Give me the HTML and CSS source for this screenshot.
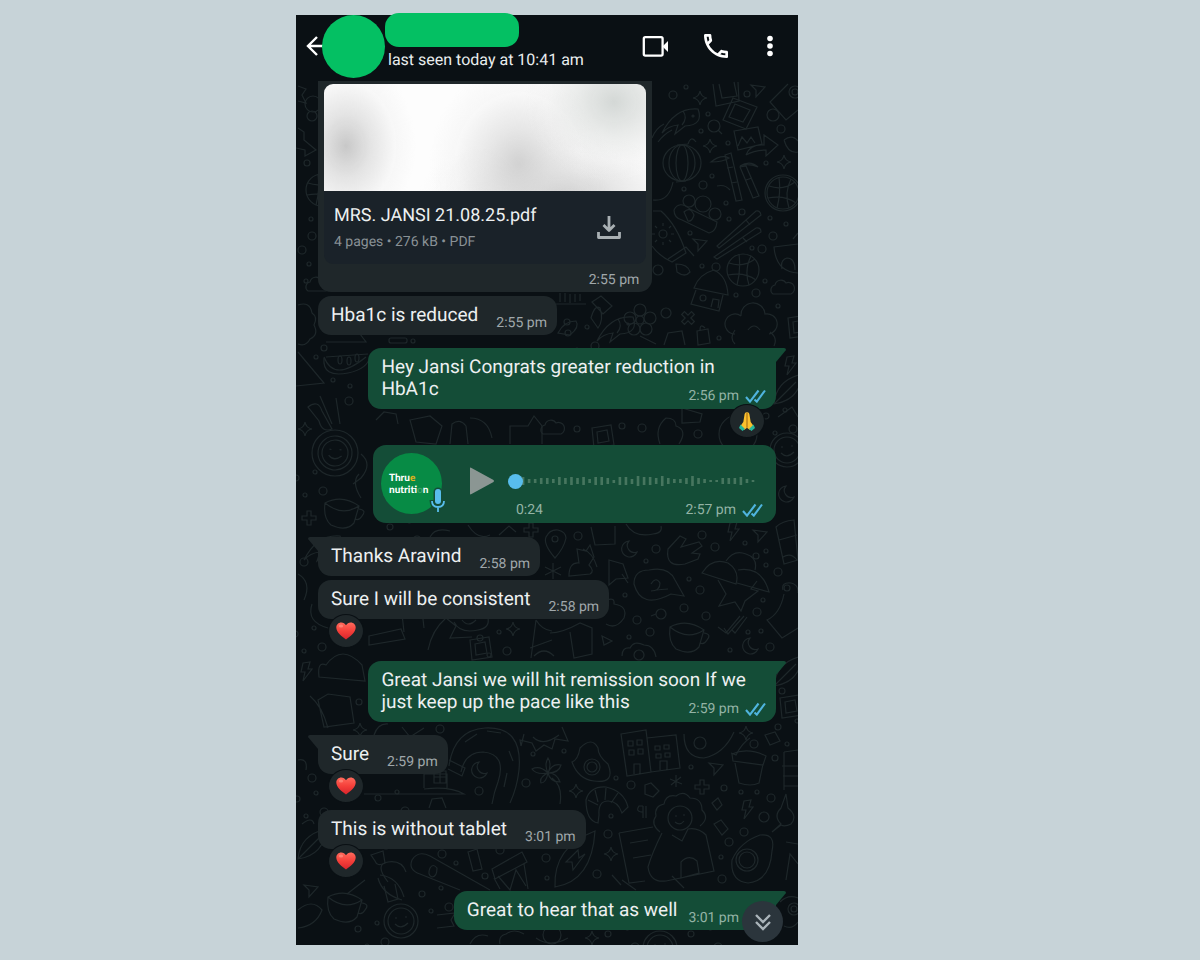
FILE: index.html
```html
<!DOCTYPE html>
<html lang="en">
<head>
<meta charset="utf-8">
<meta name="viewport" content="width=device-width, initial-scale=1">
<title>Chat</title>
<link rel="stylesheet" href="styles.css">
</head>
<body>
<svg class="defs" aria-hidden="true">
  <defs>
    <linearGradient id="heartFill" x1="0" y1="0" x2="0" y2="1"><stop offset="0" stop-color="#ff6a5c"/><stop offset=".5" stop-color="#f5403a"/><stop offset="1" stop-color="#d8242c"/></linearGradient>
    <symbol id="heart" viewBox="0 0 20 18"><path fill="url(#heartFill)" d="M10 17.6C6 14.6.3 10.500.3 5.600.3 2.600 2.500.4 5.300.4c2 0 3.700 1.100 4.700 2.900C11 1.500 12.700.4 14.700.4c2.800 0 5 2.200 5 5.200 0 4.900-5.700 9-9.700 12z"/><ellipse cx="5" cy="4" rx="2.200" ry="1.500" fill="#ff9c8c" opacity=".6"/></symbol>
    <symbol id="hands" viewBox="0 0 18 20"><path fill="#fbc02d" d="M8.800 1C7 1.200 6.500 3 6.300 5L5.300 11l-2.500 3.500L6 19l2.800-2zM9.200 1c1.800.2 2.300 2 2.500 4l1 6 2.500 3.500L12 19l-2.800-2z"/><path d="M9 2v14.500" stroke="#c98212" stroke-width="1"/><path fill="#26b59b" d="M2.500 13.500 7 18l-2.500 2L1 17zM15.500 13.500 11 18l2.500 2L17 17z"/></symbol>
    <symbol id="ticks" viewBox="0 0 21 14"><path d="M1 8l4 4.600L13.500 1.500M9.500 10.500l2.300 2.100L20 1.500" fill="none" stroke="#4fb4de" stroke-width="2.100"/></symbol>
    <path id="star" d="M0-7Q1-1 7 0 1 1 0 7-1 1-7 0-1-1 0-7z"/>
    <path id="bolt" d="M-3-9 4-10 2-3 6-3-3 9-1 0-5 0z"/>
    <path id="plane" d="M-7-5 7-3-2 7-2 0z"/>
    <path id="moon" d="M0-8A8 8 0 1 0 8 3 7 7 0 0 1 0-8z"/>
    <path id="cloud" d="M-9 6A5 5 0 0 1-7-3 6 6 0 0 1 4-5 5 5 0 0 1 9 6z"/>
    <path id="cross" d="M-2-7H2V-2H7V2H2V7H-2V2H-7V-2H-2z"/>
    <path id="leaf" d="M-14 14Q-12-10 14-16 12 10-14 14zM-14 14 8-8"/>
    <g id="blossom"><circle r="4"/><circle cy="-10" r="6"/><circle cx="10" cy="-2" r="6"/><circle cx="6" cy="9" r="6"/><circle cx="-6" cy="9" r="6"/><circle cx="-10" cy="-2" r="6"/></g>
    <g id="dots"><circle cx="-14" cy="-6" r="3"/><circle cx="5" cy="-12" r="2"/><circle cx="13" cy="7" r="4"/><circle cx="-5" cy="11" r="2"/></g>
    <g id="smile"><circle r="17"/><circle r="13"/><path d="M-6-3h2M4-4h2M-6 3Q0 9 7 2"/></g>
    <g id="ball"><circle r="16"/><path d="M-14-7Q0-2 12-11M-15 5Q2 2 13 10M-4-16Q-2 0-6 15M8-14Q1 0 6 15"/></g>
    <g id="box"><path d="M-10-8 9-11 12 9-8 12zM-5-4 5-6 7 5-4 7z"/></g>
    <g id="cup"><path d="M-17-9Q0-18 17-6L12 11Q4 20-11 13-19 6-17-9zM-17-9Q0 5 17-6M17-3Q25-2 20 4 17 9 13 7"/></g>
    <g id="fish"><path d="M-18 12Q-5-14 18-12 24 4 5 5L-5 13-2 4Q-12 5-18 12zM3-10Q8-3 2 4"/><circle cx="13" cy="-5" r="1"/></g>
  </defs>
</svg>

<main class="phone">
  <header class="topbar">
    <button class="icon-btn back" aria-label="Back"><svg viewBox="0 0 22 22" width="22" height="22"><path d="M11 2 2 11l9 9M2 11h20" fill="none" stroke="#fff" stroke-width="2.400"/></svg></button>
    <span class="avatar"></span>
    <div class="who">
      <span class="name"></span>
      <span class="seen">last seen today at 10:41 am</span>
    </div>
    <nav class="actions" aria-label="Chat actions">
      <button class="icon-btn" aria-label="Video call"><svg viewBox="0 0 32 32" width="32" height="32"><rect x="3.800" y="7.200" width="18.800" height="18.400" rx="1.500" fill="none" stroke="#fff" stroke-width="2.300"/><path d="m23 16 5-5v11l-5-5z" fill="#fff"/></svg></button>
      <button class="icon-btn" aria-label="Voice call"><svg viewBox="0 0 24 24" width="32" height="32"><path fill="#fff" d="M6.540 5c.06.890.210 1.760.450 2.590l-1.200 1.200c-.410-1.200-.670-2.470-.760-3.790h1.510m9.860 12.020c.850.240 1.720.390 2.600.450v1.490c-1.320-.090-2.590-.350-3.800-.750l1.200-1.190M7.500 3H4c-.550 0-1 .450-1 1 0 9.390 7.610 17 17 17 .550 0 1-.450 1-1v-3.490c0-.550-.450-1-1-1-1.240 0-2.450-.200-3.570-.570-.100-.040-.210-.050-.310-.050-.260 0-.510.100-.710.290l-2.200 2.200c-2.830-1.450-5.150-3.760-6.590-6.590l2.200-2.200c.280-.280.360-.670.250-1.020C8.700 6.450 8.500 5.250 8.500 4c0-.550-.450-1-1-1z"/></svg></button>
      <button class="icon-btn" aria-label="More options"><svg viewBox="0 0 20 32" width="20" height="32" fill="#fff"><circle cx="10" cy="8.500" r="2.800"/><circle cx="10" cy="16" r="2.800"/><circle cx="10" cy="23.500" r="2.800"/></svg></button>
    </nav>
  </header>

  <section class="chat">
    <svg class="doodles" viewBox="296 81 502 864" preserveAspectRatio="xMidYMin slice" aria-hidden="true">
      <!-- left margin -->
      <path d="M298 86l8 3-4 6 4 8-8-2M298 128l6 4v8l12 10-11 6v-6l-9-2"/>
      <circle cx="313" cy="104" r="8"/><circle cx="312" cy="116" r="5"/><use href="#ball" x="322" y="190"/><circle cx="307" cy="163" r="3"/>
      <circle cx="311" cy="219" r="2"/><circle cx="312" cy="236" r="4"/><circle cx="302" cy="250" r="4"/><circle cx="309" cy="264" r="2"/><circle cx="306" cy="281" r="2"/><use href="#cloud" x="317" y="285"/>
      <!-- top right -->
      <circle cx="673" cy="95" r="4"/><circle cx="686" cy="87" r="2"/><use href="#star" x="700" y="98"/><circle cx="708" cy="114" r="2"/>
      <path d="M713 84l3 22 23-5-1-19M719 84l3 14 15-2-3-14M733 98l24 9-11 22-23-9zM735 104l15 6-7 12-14-5z"/>
      <use href="#plane" x="758" y="90"/><circle cx="747" cy="94" r="3"/><path d="M788 84l-18 18 16 18 12-10"/><circle cx="795" cy="92" r="6"/><circle cx="795" cy="92" r="3"/>
      <circle cx="773" cy="115" r="6"/><circle cx="781" cy="129" r="4"/><use href="#fish" x="680" y="121"/><circle cx="714" cy="126" r="6"/><path d="M718 130l4 4M664 124q-8 4-12 14M672 130q-8 4-14 12"/>
      <path d="M734 131l24-4 4 17-24 6zM738 146l4-9 5 6 4-6 4 6M746 155q4-11 18-10v-10l14 10-12 11v-6q-12 0-20 5"/>
      <use href="#star" x="710" y="146"/><circle cx="701" cy="131" r="2"/><circle cx="728" cy="143" r="2"/><path d="M784 140q8-6 14 1M784 140q4 14 14 12"/>
      <ellipse cx="682" cy="163" rx="19" ry="18"/><ellipse cx="682" cy="163" rx="6" ry="18"/><ellipse cx="682" cy="163" rx="13" ry="18"/><path d="M677 145l11-1M676 182l10-1M688 144q3-9 8-2M673 182q-4 20-20 18"/>
      <path d="M725 155l6-2 11 47-6 1zM740 167l6-1 13 30-6 2zM711 162q10-8 18-4-6 4-18 4zM740 166q10-6 18 1-10-4-18-1zM717 186q8-2 13 4M727 168l6-1M731 183l6-1M746 180l6-2"/>
      <circle cx="766" cy="163" r="2"/><use href="#star" x="784" y="162"/><use href="#ball" x="783" y="193"/><circle cx="783" cy="193" r="18"/><circle cx="712" cy="176" r="2"/><circle cx="703" cy="185" r="4"/><circle cx="684" cy="189" r="2"/>
      <circle cx="689" cy="201" r="6"/><circle cx="703" cy="204" r="8"/><circle cx="715" cy="214" r="6"/><path d="M674 210q5-10 16-1l27 13q-1 10-8 11l-27-13q-8-2-8-10M684 212q6-6 10 3-2 7-6 6z"/>
      <circle cx="726" cy="203" r="2"/><circle cx="742" cy="212" r="3"/><circle cx="729" cy="219" r="2"/><circle cx="770" cy="218" r="2"/><circle cx="786" cy="224" r="2"/><circle cx="773" cy="236" r="4"/>
      <path d="M717 246l39-35q4-1 5 4l-42 33zM714 257l42-29q5-1 5 4l-44 27zM746 220l4 5M743 238l4 4"/>
      <path d="M653 211h8q16 14 25 42l-14 9q-13-6-20-16M668 259l18-12 8 9"/><circle cx="663" cy="234" r="4"/><path d="M663 226v-3M663 245v-3M655 234h-3M674 234h-3M657 228l-2-2M669 240l2 2M657 240l-2 2M669 228l2-2"/>
      <use href="#plane" x="700" y="244"/><circle cx="690" cy="233" r="2"/><circle cx="752" cy="248" r="2"/><circle cx="762" cy="249" r="4"/><path d="M798 244l-24 3q2 25 24 26M782 269q-2-9 5-11 8 0 8 12M798 233l-5 6"/>
      <circle cx="658" cy="270" r="5"/><path d="M676 264q12 0 14 8-5 6-13 0z"/><circle cx="702" cy="266" r="2"/><use href="#ball" x="743" y="270"/>
      <path d="M694 288q5-14 20-18 13 6 14 25l-34-7zM696 290l-5 14 28 7 4-16M711 307l2-8 6 1-1 8"/><circle cx="716" cy="267" r="4"/><circle cx="703" cy="298" r="3"/>
      <use href="#cloud" x="782" y="288"/><circle cx="765" cy="281" r="2"/><circle cx="756" cy="293" r="4"/><circle cx="736" cy="295" r="2"/><circle cx="666" cy="313" r="5"/><use href="#cross" x="688" y="318" transform="rotate(45 688 318)"/>
      <path d="M741 316a12 12 0 1 1 24-2 10 10 0 1 1 4 20M741 316a10 10 0 1 0-6 18M735 330q-6 8 0 14M770 332q8 6 4 14M748 330q6-8 12 0"/>
      <path d="M697 331l11-2 2 14-12 2zM700 330q0-7 5-2"/><circle cx="719" cy="338" r="2"/><circle cx="778" cy="306" r="2"/><use href="#box" x="798" y="326"/><use href="#blossom" x="640" y="320"/><path d="M664 345l4-12 14-2 3 14M640 336l16 8"/>
      <!-- around the first replies -->
      <path d="M556 304h30M560 293v9M565 293v9M570 294v9M575 294v8M580 294v7"/><path d="M592 302l9-6 11 10-9 8zM591 318q4-14 9-10 4 12-2 20z"/><circle cx="567" cy="322" r="3"/><path d="M558 333q6-12 18-12 4 6-6 14z"/><use href="#fish" x="615" y="329"/><use href="#dots" x="582" y="339"/>
      <path d="M298 305q12-4 14 8 6 4 2 12 5 10-4 14-4 8-12 5"/><path d="M326 342h40l-6-8M324 357q10 26 42 0M326 357l42-3"/><path d="M324 358q-2 20 24 15 20-4 22-17"/><ellipse cx="340" cy="360" rx="2" ry="4"/><ellipse cx="349" cy="361" rx="2" ry="4"/><ellipse cx="357" cy="358" rx="2" ry="4"/>
      <path d="M298 352l26 31-28 3"/><rect x="389" y="338" width="18" height="5" rx="2"/><circle cx="413" cy="341" r="2"/><circle cx="324" cy="348" r="3"/><circle cx="316" cy="357" r="2"/><circle cx="333" cy="380" r="2"/><circle cx="350" cy="386" r="2"/><circle cx="349" cy="401" r="4"/>
      <path d="M308 407q10-8 14 4l10 18q-10 4-13-8zM320 396l12 28M336 398l4 26"/><use href="#leaf" x="788" y="390"/><use href="#smile" x="787" y="450"/><use href="#bolt" x="790" y="366"/><path d="M778 417l14-10 6 10"/>
      <use href="#smile" x="335" y="453" transform="rotate(8 335 453)"/><circle cx="335" cy="453" r="23"/><use href="#star" x="305" y="429"/><use href="#dots" x="310" y="484"/><use href="#cross" x="309" y="518"/><use href="#cup" x="342" y="512"/>
      <path d="M376 420l8-8 12 2 2 10M410 420l20-4 12 10-6 18-20-2zM450 444l2-20q8-6 14 2l2 18M470 418q18 0 22 20M510 444v-18h18l6-10 8 10v18"/>
      <use href="#cloud" x="552" y="428"/><circle cx="577" cy="429" r="3"/><use href="#box" x="602" y="436"/><circle cx="622" cy="426" r="3"/><circle cx="642" cy="428" r="4"/><path d="M660 444q-6-16 6-26 10 0 10 8 12 4 3 18M682 408l20 6-2 8-18 1z"/><circle cx="698" cy="434" r="4"/><circle cx="738" cy="434" r="19"/><use href="#dots" x="780" y="422"/>
      <path d="M361 454q12 10 0 24l-8 6M361 498q-10-16-2-24"/><use href="#moon" x="786" y="494"/>
      <!-- below the voice note -->
      <use href="#fish" x="322" y="548"/><circle cx="304" cy="562" r="4"/><path d="M298 574q14 8 6 26"/><use href="#dots" x="404" y="533"/><path d="M430 537q5-10 20-6M468 525q10 16 22 10M499 535l10-9 7 6"/><use href="#cross" x="531" y="530"/>
      <path d="M555 558q-12-14-9-21 4-8 12-7 8 2 8 8-2 10-11 20z"/><circle cx="555" cy="539" r="3"/><circle cx="578" cy="536" r="4"/><path d="M591 527l4 18 20-1v-18M626 524q8 14 27 10 10-1 8-8"/><use href="#moon" x="629" y="549"/><circle cx="656" cy="549" r="4"/><circle cx="646" cy="561" r="2"/>
      <g transform="translate(553 571)"><path d="M0-8V8M-8-4 8 4M-8 4 8-4"/></g><path d="M569 576q0-14 10-13l-2-14 9 2 4-6 4 12-5 8q6 6 1 9zM583 549q10 4 14 18"/><path d="M609 560l14 4 5 14-12 1-7 6zM622 574l6 9"/>
      <path d="M668 549l12-13 6 3-5 8 18-5 3 4-10 7 8 1-2 5-13 5q-20 4-17-15z"/><circle cx="702" cy="535" r="4"/><circle cx="715" cy="547" r="4"/><use href="#bolt" x="733" y="532"/><circle cx="745" cy="543" r="2"/><use href="#plane" x="760" y="535"/><circle cx="756" cy="556" r="3"/><circle cx="766" cy="551" r="2"/><circle cx="766" cy="565" r="2"/><circle cx="778" cy="572" r="4"/><path d="M776 527q6-6 18-7l4 40-14 4zM779 540l18-5M783 557q8-5 14 3"/>
      <path d="M634 584q0-14 15-14 20-4 26 10l9 16-13-2q-30 16-37-10zM651 584q5-8 9-1 0 8-9 8 12-2 17-2"/>
      <path d="M702 573q10-16 26-10 12 8 8 21zM726 561q8-12 20-7 12 4 9 16M738 570q24-4 31 22l-32-9M718 580l8 14-7 12 16-4 6 9 4-10 13-10-7-2 6-8"/><circle cx="689" cy="579" r="2"/><circle cx="700" cy="590" r="4"/><circle cx="625" cy="595" r="2"/><circle cx="684" cy="608" r="4"/><circle cx="763" cy="600" r="2"/><circle cx="757" cy="612" r="4"/><circle cx="706" cy="616" r="4"/>
      <path d="M783 590q-2-8 8-7 8 2 7 10M784 594q-4 20-17 26l15 18 16-10"/><circle cx="787" cy="588" r="3"/><circle cx="661" cy="614" r="5"/><path d="M656 614l-5 2"/><circle cx="637" cy="620" r="4"/><circle cx="650" cy="632" r="4"/><circle cx="629" cy="637" r="2"/>
      <path d="M607 600q8-3 7 4 14 2 10 14-8 12-18 6"/><use href="#cup" x="687" y="636"/><path d="M718 627l8 6 14-17M724 628l4 6 16-18M732 630l3 3 12-16"/><use href="#moon" x="750" y="646"/><circle cx="748" cy="632" r="2"/><circle cx="761" cy="631" r="2"/><circle cx="770" cy="647" r="4"/><circle cx="730" cy="650" r="2"/>
      <use href="#star" x="513" y="629"/><path d="M536 620l-5 38M536 620q6 10 16 11M530 648l22-8M550 633q12 0 30-10l12 5v26l-18 4-4-26M534 656q10-10 20 0"/><path d="M602 636l10 5-8 4z"/><path d="M622 656q0-9 8-8 4-8 14-3 10 0 12 12"/><circle cx="639" cy="655" r="5"/>
      <path d="M369 636l32-7 4 10-36 6zM404 632l-2-18 20-4 2 18M428 650q4-20 18-32l10 8-6 12 22-1M454 622q6 12 24 8 12-2 10-12M462 620q6 8 14 0"/><use href="#dots" x="494" y="644"/><use href="#box" x="480" y="648"/><path d="M312 604q-6 18 16 24"/><use href="#dots" x="309" y="640"/>
      <path d="M326 665q16-22 36 0l3 16-46-4q-2-16 7-12zM318 700l10-6 22 3 4 26-30 4zM310 696q12 10 18 32"/><use href="#bolt" x="306" y="672"/><circle cx="359" cy="702" r="3"/><use href="#star" x="360" y="730"/><path d="M374 735q4-12 14-11M402 727l8 10 14-9"/><circle cx="440" cy="729" r="4"/>
      <use href="#leaf" x="788" y="672"/><use href="#box" x="790" y="706"/><use href="#dots" x="792" y="733"/><circle cx="782" cy="691" r="3"/>
      <!-- lower half -->
      <path d="M449 766q5-36 36-38 38-2 34 42-2 18-9 33M461 772q4-20 22-20 24 2 15 30-4 10-6 22M465 742l12-8M487 731l14 2M509 751l4 10M507 773l-3 14M449 760l16 8-3 8-14-7"/><use href="#moon" x="479" y="770"/><circle cx="479" cy="791" r="4"/>
      <path d="M364 794h100q-14-8-40-5M424 788v-14h23v14M434 771h12v12h-12zM440 771v12M434 777h12"/>
      <path d="M521 746l3-12M521 746l-1-6 12 3 4 8 8-6 8 4 3-10 13 2-6-14M533 737q10 10 26-2"/><circle cx="533" cy="754" r="2"/><circle cx="564" cy="751" r="2"/><path d="M548 773q-4-8 0-15 4 6 0 15 4-10 13-8-2 8-13 8 9 0 12 9-10 0-12-9-2 10-7 10-2-6 7-10-12 2-16-4 8-4 16 4M552 778q11 8 8 26"/>
      <path d="M572 762q6-2 8-14 12-12 18 0 0 8 10 16 8 20-14 17-16-2-22-19z"/><circle cx="592" cy="767" r="8"/><circle cx="592" cy="767" r="5"/><circle cx="526" cy="783" r="4"/><circle cx="616" cy="778" r="2"/><use href="#star" x="576" y="791"/>
      <path d="M621 734l25-4 5 42-24 4zM647 738l29-3 4 33-29 4M634 774v-10h6v10M660 770v-9h7v9M628 741h5v5h-5zM637 740h5v5h-5zM629 750h5v5h-5zM638 749h5v5h-5zM655 746h5v4h-5zM664 745h5v4h-5zM656 754h5v4h-5zM665 753h5v4h-5z"/>
      <path d="M684 734q0 24 20 24 20-4 30-26"/><circle cx="700" cy="743" r="6"/><path d="M731 753l5 2q6-12 14-17"/><use href="#plane" x="716" y="768"/><circle cx="691" cy="767" r="2"/><use href="#star" x="746" y="733"/><path d="M765 735l10-3 5 9-10 4z"/><circle cx="754" cy="744" r="4"/>
      <path d="M732 754q16-7 34 2l-3 9-30-4zM735 763l4 20q12 4 20 0l4-19"/><circle cx="775" cy="758" r="3"/><path d="M784 752l14-2M782 766h16M783 776h15M784 786h14M784 752v38"/><use href="#cross" x="702" y="787"/><circle cx="724" cy="788" r="3"/><circle cx="741" cy="792" r="2"/><circle cx="757" cy="792" r="2"/><circle cx="771" cy="798" r="4"/>
      <path d="M586 800q4-14 20-13 18 4 22 20l-6 6q-4-12-14-12-10 0-9 14l-1 8q-12-2-12-23zM595 790l3 12M606 788l-1 12M618 793l-7 10M588 800l10 5"/><circle cx="611" cy="816" r="2"/><circle cx="631" cy="785" r="4"/><path d="M645 785l6-2 8 8-6 6-8-3z"/><g transform="translate(676 781)"><path d="M0-6V6M-6-2 6 3M-5 4 5-4"/></g><path d="M646 806v12M643 806h-4q-4 6 4 6M643 806v12"/>
      <circle cx="680" cy="818" r="12"/><path d="M675 816h2M683 815h2M675 822q5 4 9-1M660 832q-10-8-4-16-2-10 8-12 2-10 12-8 8-6 14 2 12 0 12 12 8 8-2 16"/><path d="M619 833l34-6M619 833l10 50 16-2M662 833q-10 20-14 34 2 16 18 14l48-10-8-36q-8-8-18-6l-6 12-10-6M681 862q8-8 16-1l2 12-18 5zM630 843l18-3M633 858l18-3M612 875l9 10"/>
      <use href="#bolt" x="747" y="810"/><path d="M714 824l7-4 7 9-6 6zM712 803l6-5 4 7-5 5z"/><circle cx="764" cy="817" r="5"/><circle cx="744" cy="832" r="4"/><circle cx="729" cy="842" r="4"/><circle cx="721" cy="857" r="2"/><circle cx="722" cy="879" r="4"/>
      <path d="M732 860q8-18 28-25 16-2 12 16-2 30-24 32-18-2-16-23zM772 832l9-8q-8-8 0-16l5-14 2 14q10 8 3 16-6 3-10 1z"/><circle cx="747" cy="860" r="11"/><circle cx="747" cy="860" r="8"/><path d="M786 842l12 2M786 880l4-26 8 10"/>
      <path d="M555 887q-2-40 40-56-3 50-40 56zM566 862l12-12 1 8 6-4-12 16-1-8z"/><circle cx="608" cy="834" r="4"/><use href="#star" x="611" y="854"/><circle cx="597" cy="874" r="4"/><circle cx="546" cy="858" r="4"/><circle cx="547" cy="878" r="2"/>
      <path d="M492 869l30-17 5 10-32 17zM494 878l6 11M524 864l4 25M498 876l12 14 6-20 10 16"/><path d="M468 852l9-3 5 20-9 2z"/><circle cx="500" cy="850" r="4"/><circle cx="456" cy="863" r="2"/><circle cx="485" cy="876" r="3"/><path d="M412 860q6-10 18-4l60 34M412 860q-4 10 8 14l40 16M430 868q3-5 7 0 0 9-5 9-5-2-2-9"/><circle cx="442" cy="854" r="4"/>
      <path d="M371 855l12-4 2 12q-8 4-10-2zM380 875q18 2 24 22M378 878q4 16 24 22M365 880l-18 14"/><use href="#cup" x="345" y="906"/><use href="#leaf" x="312" y="845"/><use href="#dots" x="311" y="805"/><circle cx="312" cy="778" r="4"/><path d="M298 760q10-2 8 10M302 824q10-8 12 0"/><circle cx="386" cy="845" r="4"/><use href="#dots" x="392" y="804"/><path d="M429 808l3-9 10-1 4 10"/>
      <path d="M437 915l18-2-4 7 3 6-17 2M388 882q-14-18 0-20 14-2 18 10M384 886l4 16 10-3-3-15M298 910q14-12 24 0-6 16-24 18"/><use href="#plane" x="311" y="890"/><use href="#smile" x="401" y="921"/><use href="#dots" x="436" y="900"/><use href="#dots" x="372" y="935"/><path d="M470 944q6-12 18-8M500 944q-2-8 6-10 8-6 18 0M536 938q14 10 32 0"/><circle cx="552" cy="935" r="9"/><use href="#star" x="592" y="938"/><use href="#dots" x="622" y="940"/><use href="#smile" x="660" y="948"/><use href="#dots" x="705" y="940"/><path d="M780 902q8-8 18-4M784 926q8 4 14-4"/><circle cx="794" cy="909" r="6"/><circle cx="794" cy="909" r="3"/><path d="M622 880l14 10M672 876l12 12"/>
    </svg>

    <article class="bubble in doc">
      <div class="preview"></div>
      <div class="file">
        <div class="file-text">
          <span class="file-name">MRS. JANSI 21.08.25.pdf</span>
          <span class="file-info">4 pages • 276 kB • PDF</span>
        </div>
        <button class="icon-btn" aria-label="Download"><svg viewBox="0 0 24 24" width="24" height="24" fill="none" stroke="#a9b0b3" stroke-width="2.800" stroke-linejoin="round"><path d="M12 0v14M6.500 9l5.500 5.500L17.500 9M1.500 16v5.500h21V16"/></svg></button>
      </div>
      <time class="time">2:55 pm</time>
    </article>

    <article class="bubble in near"><p>Hba1c is reduced</p><time class="time">2:55 pm</time></article>

    <article class="bubble out tail wide"><p>Hey Jansi Congrats greater reduction in HbA1c<span class="meta"><time class="time">2:56 pm</time><svg class="ticks"><use href="#ticks"/></svg></span></p></article>
    <span class="reaction right"><svg width="18" height="20" role="img" aria-label="Folded hands"><use href="#hands"/></svg></span>

    <article class="bubble out voice after">
      <div class="brand">
        <span class="logo"><span>Thru<i class="sun">e</i></span><span>nutriti<i class="mint">o</i>n</span></span>
        <svg class="mic" viewBox="0 0 18 28" width="18" height="28"><path d="M9 5v9M3 13q0 7 6 7t6-7M9 20v5" fill="none" stroke="#144d37" stroke-width="5"/><path d="M9 5v9" stroke="#144d37" stroke-width="9" stroke-linecap="round"/><rect x="6" y="2" width="6" height="15" rx="3" fill="#58bdec"/><path d="M3 14q0 6 6 6t6-6M9 20v5" fill="none" stroke="#58bdec" stroke-width="1.800"/></svg>
      </div>
      <button class="icon-btn play" aria-label="Play"><svg viewBox="0 0 26 28" width="26" height="28"><path d="M1 1.500Q1 0 2.500 1L24.500 13q1 1 0 2L2.500 27Q1 28 1 26.500z" fill="#8b9693"/></svg></button>
      <div class="track">
        <div class="wave">
          <svg viewBox="0 0 240 14" width="100%" height="14" preserveAspectRatio="none" aria-hidden="true"><path stroke="#47765f" stroke-width="2.600" fill="none" d="M8 3v8M14 5v4M20 5v4M26 4v6M32 4v6M38 5v4M44 3v8M50 4v6M56 3v8M62 4v6M68 3v8M74 5v4M80 3v8M86 3v8M92 4v6M98 6v3M104 3v8M110 3v8M116 5v5M122 2v10M128 3v8M134 3v8M140 4v6M146 2v10M152 4v6M158 5v4M164 5v4M170 4v6M176 2v10M182 4v6M188 5v4M194 6v2M200 6v2M206 4v6M212 4v6M218 4v6M224 3v8M230 5v4M236 6v2"/></svg>
          <input type="range" min="0" max="24" value="0" aria-label="Playback position">
        </div>
        <div class="track-foot"><span>0:24</span><span class="meta"><time>2:57 pm</time><svg class="ticks"><use href="#ticks"/></svg></span></div>
      </div>
    </article>

    <article class="bubble in tail"><p>Thanks Aravind</p><time class="time">2:58 pm</time></article>
    <article class="bubble in near"><p>Sure I will be consistent</p><time class="time">2:58 pm</time></article>
    <span class="reaction"><svg width="20" height="18" role="img" aria-label="Red heart"><use href="#heart"/></svg></span>

    <article class="bubble out tail wide"><p>Great Jansi we will hit remission soon If we just keep up the pace like this<span class="meta"><time class="time">2:59 pm</time><svg class="ticks"><use href="#ticks"/></svg></span></p></article>

    <article class="bubble in tail"><p>Sure</p><time class="time">2:59 pm</time></article>
    <span class="reaction"><svg width="20" height="18" role="img" aria-label="Red heart"><use href="#heart"/></svg></span>

    <article class="bubble in after"><p>This is without tablet</p><time class="time">3:01 pm</time></article>
    <span class="reaction"><svg width="20" height="18" role="img" aria-label="Red heart"><use href="#heart"/></svg></span>

    <article class="bubble out tail"><p>Great to hear that as well</p><span class="meta"><time class="time">3:01 pm</time><svg class="ticks"><use href="#ticks"/></svg></span></article>

    <button class="scroll" aria-label="Scroll to latest"><svg viewBox="0 0 20 20" width="20" height="20" fill="none" stroke="#aab4ba" stroke-width="2.400"><path d="m3 3 7 7 7-7M3 10l7 7 7-7"/></svg></button>
  </section>
</main>
</body>
</html>
```

FILE: styles.css
```css
* { box-sizing: border-box; }
body {
  margin: 0;
  min-height: 100vh;
  padding: 15px 0;
  background: #c7d3d8;
  color: #e9edee;
  font-family: Roboto, "Liberation Sans", sans-serif;
  text-rendering: geometricPrecision;
  display: grid;
  grid-template-columns: 296fr minmax(480px, 502fr) 402fr;
  align-items: start;
}
.defs { position: absolute; width: 0; height: 0; }
.phone { grid-column: 2; background: #0a1014; }
.icon-btn {
  border: 0;
  padding: 0;
  background: none;
  display: flex;
  flex: none;
  cursor: pointer;
}

/* top bar */
.topbar {
  height: 66px;
  display: flex;
  align-items: flex-start;
  padding: 0 18px 0 10px;
}
.back { width: 16px; margin-top: 20px; }
.back svg { flex: none; }
.avatar {
  flex: none;
  width: 63px;
  height: 63px;
  border-radius: 50%;
  background: #04c063;
  z-index: 1;
}
.who { display: flex; flex-direction: column; margin-top: -2px; }
.name {
  width: 134px;
  height: 34px;
  border-radius: 14px;
  background: #04c063;
}
.seen { font-size: 16px; line-height: 26px; padding-left: 3px; white-space: nowrap; }
.actions { display: flex; gap: 28px; margin: 15px 0 0 auto; }

/* conversation */
.chat {
  position: relative;
  display: flex;
  flex-direction: column;
  align-items: flex-start;
  padding: 0 22px 15px;
}
.doodles {
  position: absolute;
  inset: 0;
  width: 100%;
  height: 100%;
  fill: none;
  stroke: #1e272a;
  stroke-width: 1.2;
}
.bubble {
  position: relative;
  display: flex;
  gap: 18px;
  margin-top: 13px;
  padding: 8px 10px 4px 13px;
  border-radius: 13px;
  max-width: 89%;
  background: #1f272a;
  color: #a0a8ab;
}
.bubble p {
  margin: 0;
  padding-bottom: 5px;
  font-size: 19px;
  line-height: 22px;
  color: #edf0f1;
}
.near { margin-top: 4px; }
.after { margin-top: 7px; }
.out {
  align-self: flex-end;
  gap: 11px;
  background: #144d37;
  color: #93b3a5;
}
.time { align-self: flex-end; white-space: nowrap; }
.time, .meta, .track-foot { font-size: 14px; line-height: 16px; }
.meta {
  align-self: flex-end;
  display: flex;
  align-items: center;
  gap: 6px;
  white-space: nowrap;
}
.ticks { width: 21px; height: 14px; flex: none; }
.wide p { display: flow-root; padding-bottom: 0; }
.wide { padding-bottom: 5px; }
.wide .meta { float: right; margin-top: 10px; color: #93b3a5; }
.tail::after {
  content: "";
  position: absolute;
  top: 0;
  width: 22px;
  height: 14px;
  background: inherit;
}
.out.tail { border-top-right-radius: 0; }
.out.tail::after { right: -10px; border-top-right-radius: 2px; clip-path: polygon(0 0, 100% 0, 100% 2px, 12px 100%, 0 100%); }
.in.tail { border-top-left-radius: 0; z-index: 0; }
.in.tail::after { left: -10px; border-top-left-radius: 2px; clip-path: polygon(0 0, 100% 0, 100% 100%, 10px 100%, 0 2px); z-index: -1; }

/* shared file */
.doc {
  width: 73%;
  flex-direction: column;
  gap: 0;
  margin: 0;
  padding: 3px 6px 4px;
  border-radius: 0 0 13px 13px;
}
.preview {
  height: 107px;
  border-radius: 9px 9px 0 0;
  background:
    radial-gradient(ellipse 70px 90px at 22px 62px, #c8c8c8, #d8d8d8aa 35%, #e8e8e844 70%, #f0f0f000),
    radial-gradient(ellipse 90px 80px at 290px 18px, #d4d8d6, #dcdfdd99 40%, #e8e8e833 75%, #f0f0f000),
    radial-gradient(ellipse 90px 100px at 195px 80px, #d2d2d2, #dcdcdcaa 35%, #e8e8e844 70%, #f0f0f000),
    radial-gradient(ellipse 140px 60px at 235px 110px, #c8c8c8, #d8d8d899 40%, #e8e8e833 75%, #f0f0f000),
    #fdfdfd;
}
.file {
  display: flex;
  justify-content: space-between;
  align-items: flex-start;
  height: 73px;
  padding: 14px 25px 0 10px;
  border-radius: 0 0 9px 9px;
  background: #1a2229;
}
.file .icon-btn { margin-top: 11px; }
.file-text { display: flex; flex-direction: column; gap: 5px; }
.file-name { font-size: 18px; line-height: 22px; color: #edf0f1; }
.file-info { font-size: 14px; line-height: 20px; color: #899196; }
.doc .time { padding: 8px 7px 0 0; }

/* reactions */
.reaction {
  position: relative;
  z-index: 1;
  display: grid;
  place-items: center;
  width: 36px;
  height: 34px;
  margin: -5px 0 0 10px;
  border: 1px solid #0a1014;
  border-radius: 50%;
  background: #1f272a;
}
.reaction.right { align-self: flex-end; margin: -5px 11px 0 0; }

/* voice note */
.voice {
  width: 88%;
  min-height: 78px;
  gap: 0;
  padding: 8px 13px 5px 8px;
}
.voice + .bubble { margin-top: 14px; }
.brand { position: relative; flex: none; width: 61px; height: 61px; }
.logo {
  display: flex;
  flex-direction: column;
  justify-content: center;
  width: 61px;
  height: 61px;
  padding-left: 8px;
  border-radius: 50%;
  background: #078b45;
  color: #fff;
  font: 900 10px/12px Lato, sans-serif;
}
.logo i { font-style: normal; }
.sun { color: #e0b21c; }
.mint { color: #3f9f66; }
.mic { position: absolute; right: -5px; bottom: -1px; }
.play { align-self: flex-start; margin: 14px 13px 0 27px; }
.track {
  flex: 1;
  display: flex;
  flex-direction: column;
  justify-content: space-between;
  padding-top: 20px;
}
.wave { display: grid; align-items: center; margin-right: 6px; }
.wave svg, .wave input { grid-area: 1 / 1; }
.wave svg { padding-left: 7px; }
.wave input {
  appearance: none;
  width: 100%;
  height: 16px;
  margin: 0;
  background: none;
}
.wave input::-webkit-slider-thumb {
  appearance: none;
  width: 15px;
  height: 15px;
  border-radius: 50%;
  background: #58bdec;
}
.track-foot {
  display: flex;
  justify-content: space-between;
  padding-left: 8px;
}

/* jump to newest */
.scroll {
  position: absolute;
  right: 15px;
  bottom: 3px;
  display: grid;
  place-items: center;
  width: 41px;
  height: 41px;
  border: 0;
  padding: 0;
  border-radius: 50%;
  background: #2b353c;
  cursor: pointer;
}
```
